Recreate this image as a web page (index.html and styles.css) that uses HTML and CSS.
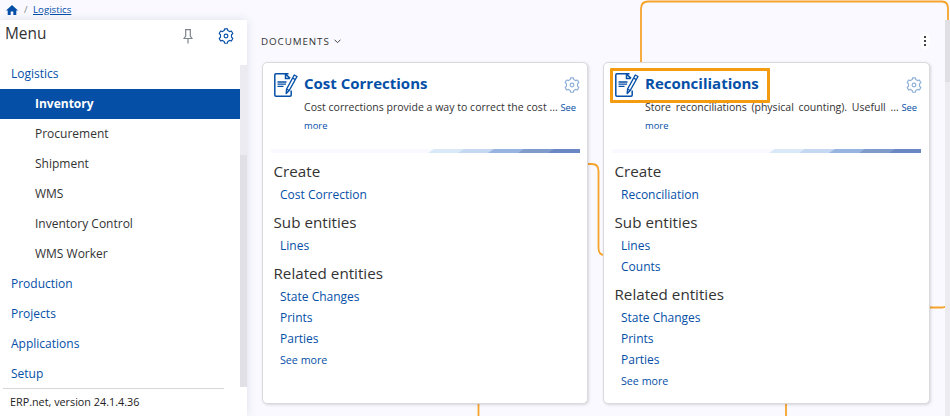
FILE: index.html
```
<!DOCTYPE html>
<html lang="en">
<head>
<meta charset="utf-8">
<title>Logistics</title>
<link rel="stylesheet" href="styles.css">
</head>
<body>
<svg class="defs" width="0" height="0" aria-hidden="true">
  <symbol id="gear" viewBox="0 0 16 16">
    <path d="M6.200 2.600 6.600.8h2.800l.4 1.800 1.700 1 1.900-.6 1.400 2.500-1.300 1.400v2.200l1.300 1.400-1.400 2.500-1.900-.6-1.700 1-.4 1.800H6.600l-.4-1.800-1.700-1-1.900.6-1.400-2.500 1.300-1.400V6.900L1.200 5.500 2.600 3l1.900.6z" fill="none" stroke="currentColor" stroke-width="1.150" stroke-linejoin="round"/>
    <circle cx="8" cy="8" r="1.900" fill="none" stroke="currentColor" stroke-width="1.150"/>
  </symbol>
  <symbol id="doc" viewBox="0 0 24 24">
    <path d="M14.500 .800H2Q.800 .800 .800 2v20q0 1.200 1.200 1.200h14q1.200 0 1.200-1.200v-4.500M11.500 1v4.500h4.200M11.500 1l4.600 4.400" fill="none" stroke="currentColor" stroke-width="1.500"/>
    <path d="M3.500 9h9M3.500 11.200h8.500M3.500 13.400h6" stroke="currentColor" stroke-width="1.300"/>
    <path d="M20.300 2l2.700 1.500-7.800 14-3 3 .400-4.500zM18.500 5l2.900 1.700M12.600 16l2.600 1.500" fill="#fff" stroke="currentColor" stroke-width="1.400" stroke-linejoin="round"/>
  </symbol>
</svg>
<svg class="lines" width="950" height="416" fill="none" stroke="#f6a42b" stroke-width="1.800">
  <path d="M641 70V9q0-7.500 7-7.500h294q6 0 6 7v20M580 164h12q6.500 0 6.500 7v77q0 7 6 7M478.500 400v16M786 400v16M925 307.500h17l8-2"/>
</svg>
<header class="crumbs">
  <svg width="12" height="11" viewBox="0 0 12 11"><path d="M6 0l6 5.500H10.300V10H7.300V6.500H4.700V10H1.700V5.500H0z" fill="#054fa7"/></svg>
  <span class="slash">/</span><a>Logistics</a>
</header>
<div class="shell">
  <aside class="side">
    <div class="side-head"><h1>Menu</h1>
      <svg class="pin" width="10" height="15" viewBox="0 0 10 15" fill="none" stroke="#7d858d" stroke-width="1.200"><path d="M2 .700h6M2.700 .700v6.300L1 9.500h8L7.300 7V.700M5 9.500v5"/></svg>
      <svg class="gear" width="16" height="16"><use href="#gear"/></svg>
    </div>
    <div class="side-body">
      <nav>
        <a>Logistics</a>
        <a class="sub active">Inventory</a>
        <a class="sub">Procurement</a>
        <a class="sub">Shipment</a>
        <a class="sub">WMS</a>
        <a class="sub">Inventory Control</a>
        <a class="sub">WMS Worker</a>
        <a>Production</a>
        <a>Projects</a>
        <a>Applications</a>
        <a>Setup</a>
      </nav>
      <div class="track"><div class="thumb"></div></div>
    </div>
    <footer><span>ERP.net, version 24.1.4.36</span></footer>
  </aside>
  <main>
    <div class="bar"><span>DOCUMENTS</span><svg width="7" height="5" viewBox="0 0 7 5"><path d="M.500 .700l3 3 3-3" fill="none" stroke="#444"/></svg>
      <div class="dots"><i></i><i></i><i></i></div>
    </div>
    <div class="cards">
      <article class="card">
        <div class="head"><svg class="doc" width="24" height="24"><use href="#doc"/></svg><h2>Cost Corrections</h2><svg class="gear soft" width="16" height="16"><use href="#gear"/></svg></div>
        <div class="desc"><p class="d1"><span>Cost corrections provide a way to correct the cost ...</span> <a>See</a></p><p><a>more</a></p></div>
        <div class="ribbon"><i></i><i></i><i></i><i></i><i></i></div>
        <h3>Create</h3><ul><li>Cost Correction</li></ul>
        <h3>Sub entities</h3><ul><li>Lines</li></ul>
        <h3>Related entities</h3><ul><li>State Changes</li><li>Prints</li><li>Parties</li><li class="more">See more</li></ul>
      </article>
      <article class="card">
        <div class="head"><svg class="doc" width="24" height="24"><use href="#doc"/></svg><h2>Reconciliations</h2><svg class="gear soft" width="16" height="16"><use href="#gear"/></svg><div class="mark"></div></div>
        <div class="desc"><p class="d2"><span>Store reconciliations (physical counting). Usefull ...</span> <a>See</a></p><p><a>more</a></p></div>
        <div class="ribbon"><i></i><i></i><i></i><i></i><i></i></div>
        <h3>Create</h3><ul><li>Reconciliation</li></ul>
        <h3>Sub entities</h3><ul><li>Lines</li><li>Counts</li></ul>
        <h3>Related entities</h3><ul><li>State Changes</li><li>Prints</li><li>Parties</li><li class="more">See more</li></ul>
      </article>
    </div>
  </main>
  <div class="page-track"><div class="page-thumb"></div></div>
</div>
</body>
</html>
```
FILE: styles.css
```
* { box-sizing: border-box; }
body { margin: 0; height: 416px; overflow: hidden; background: #f9f9ff; color: #333; font: 12px/18px "Open Sans", sans-serif; }
h1, h2, h3, p, ul { margin: 0; padding: 0; font-weight: 400; }
ul { list-style: none; }
svg { display: block; flex: none; }
.defs, .lines { position: absolute; left: 0; top: 0; }
a, li { color: #054fa7; }
.crumbs { position: relative; height: 20px; display: flex; align-items: center; padding-left: 6px; font-size: 9.7px; }
.crumbs .slash { width: 9px; margin-left: 6px; color: #888; }
.crumbs a { text-decoration: underline; }
.shell { position: relative; display: flex; height: 396px; }
.side { width: 247px; background: #fff; box-shadow: 0 0 9px rgba(50, 50, 90, .13); display: flex; flex-direction: column; }
.side-head { height: 45px; display: flex; padding: 0 13px 0 5px; align-items: flex-start; }
h1 { font-size: 15.400px; line-height: 27px; flex: 1; }
.pin { margin: 9px 25px 0 0; }
.gear { color: #054fa7; margin-top: 8px; }
.side-body { display: flex; height: 322px; }
nav { width: 240px; display: flex; flex-direction: column; margin-top: -6px; }
nav a { height: 30px; line-height: 30px; padding-left: 11px; }
nav .sub { padding-left: 35px; color: #333; }
nav .active { background: #054fa7; color: #fff; font-weight: 700; }
.track { width: 7px; background: #ebebf1; padding-top: 90px; }
.thumb { height: 232px; background: #e0e0e6; }
footer { margin: 1px 0 0 3px; width: 221px; border-top: 1px solid #d8d8dc; padding: 4px 0 0 7px; font-size: 10.8px; color: #222; }
main { width: 698px; padding-left: 14px; }
.bar { height: 43px; margin-bottom: -1px; display: flex; align-items: center; font-size: 9.8px; letter-spacing: .92px; gap: 4px; padding-right: 15px; }
.dots { margin-left: auto; display: flex; flex-direction: column; gap: 2px; padding: 4px; margin-top: -2px; background: #fff; border-radius: 50%; }
.dots i { width: 2px; height: 2px; background: #444; }
.cards { display: flex; gap: 15px; padding-left: 1px; }
.card { width: 326px; height: 342px; background: #fff; border: 1px solid #dadade; border-radius: 5px; box-shadow: 1px 1px 3px rgba(0, 0, 0, .14); padding: 10px 7px 0 8px; }
.card + .card { width: 327px; padding-right: 8px; }
.card + .card .gear { margin-right: -1px; }
.head { height: 26px; display: flex; position: relative; color: #054fa7; padding-left: 3px; }
h2 { font-size: 15px; line-height: 20px; font-weight: 700; margin-left: 6px; }
.gear.soft { opacity: .45; margin: 4px 0 0 auto; }
.mark { position: absolute; left: -2px; top: -5px; width: 160px; height: 35px; border: 3px solid #f39c12; border-radius: 1px; }
.desc { height: 50px; padding-left: 33px; font-size: 10.5px; margin-top: -1px; }
.desc p { white-space: nowrap; }
.desc p + p { line-height: 17px; }
.desc a { font-size: 9.4px; }
.desc .d1 span { letter-spacing: .02px; }
.desc .d2 span { word-spacing: 2px; }
.ribbon { height: 4px; background: #f9f9ff; margin: 1px 0 7px; display: flex; justify-content: flex-end; }
.ribbon i { width: 36px; margin-left: -6px; clip-path: polygon(6px 0, 100% 0, 100% 100%, 0 100%); }
.ribbon i:nth-child(1) { background: #d9e9f8; }
.ribbon i:nth-child(2) { background: #c4d8f1; }
.ribbon i:nth-child(3) { background: #96b4df; }
.ribbon i:nth-child(4) { background: #7e9bcc; }
.ribbon i:nth-child(5) { background: #6b87c3; width: 32px; }
h3 { font-size: 15.2px; line-height: 22px; height: 24px; margin-left: 2.500px; }
ul { padding: 0 0 6px 9px; }
li { line-height: 21px; height: 21px; }
li.more { font-size: 10.7px; line-height: 22px; }
.page-track { width: 5px; background: #ebebf0; }
.page-thumb { height: 62px; background: #e0e0e4; }
```
